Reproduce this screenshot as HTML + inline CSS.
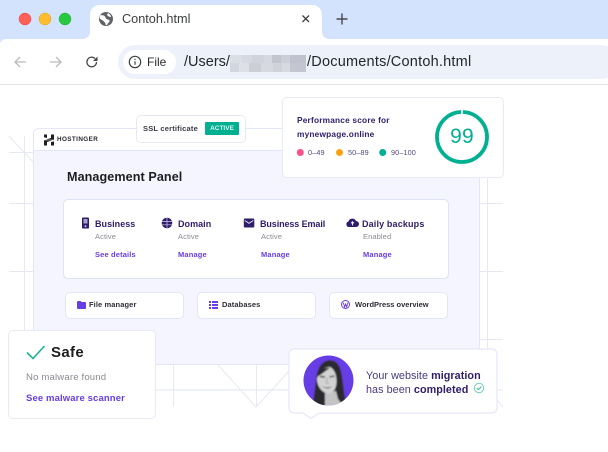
<!DOCTYPE html>
<html><head><meta charset="utf-8"><style>
html,body{margin:0;padding:0;width:608px;height:452px;overflow:hidden;background:#fff;font-family:"Liberation Sans",sans-serif}
.a{position:absolute;white-space:nowrap}
.card{position:absolute;background:#fff;border:1px solid #e6e8f8;border-radius:5px;box-sizing:border-box}
.b{font-weight:bold}
.soft{position:absolute;left:0;top:84px;width:608px;height:368px;filter:blur(.35px)}
.soft .a{margin-top:-84px}
.soft .card{margin-top:-84px}
.t{font-size:9px;font-weight:bold;color:#2f1c6a;letter-spacing:.04px}
.s{font-size:7.500px;color:#8a8a94;letter-spacing:.1px}
.l{font-size:7.500px;font-weight:bold;color:#673de6;letter-spacing:.15px}
.f{font-size:7.500px;font-weight:bold;color:#2d2d3a;letter-spacing:0}
</style></head><body>
<div class="a" style="left:0;top:0;width:608px;height:39px;background:#d3e3fd"></div>
<div class="a" style="left:0;top:39px;width:608px;height:45px;background:#fff"></div>
<div class="a" style="left:0;top:84px;width:608px;height:1px;background:#e4e4e6"></div>
<svg class="a" style="left:0;top:0" width="608" height="85">
<path d="M82 39c5 0 8-3 8-8V15c0-6 4-10 10-10h212c6 0 10 4 10 10v16c0 5 3 8 8 8z" fill="#fff"/>
<path d="M0 39h7q-5 0-7 4z" fill="#d3e3fd"/>
<circle cx="25" cy="19" r="6" fill="#fe5f57" stroke="#e2483f" stroke-width=".5"/>
<circle cx="45" cy="19" r="6" fill="#febc2e" stroke="#dea123" stroke-width=".5"/>
<circle cx="65" cy="19" r="6" fill="#28c840" stroke="#1fab32" stroke-width=".5"/>
<circle cx="106" cy="19" r="7" fill="#5f6368"/>
<path d="M100.500 15c2 .5 3 0 4 1s1 2 2 3 3 0 3 2-2 1.500-2 3.500c-1 1-2 .5-2-.5s-1-2-2-3-2.500-1-3.500-2.500 0-2.500.5-3.500zM108 13c1 1 3 2 3 4-2 0-3-1-4-2z" fill="#fff"/>
<path d="M302.500 15.500l6.500 6.500M309 15.500l-6.500 6.500" stroke="#3c4043" stroke-width="1.300" fill="none"/>
<path d="M342 13.500v11M336.500 19h11" stroke="#47494d" stroke-width="1.400" fill="none"/>
<rect x="118" y="45" width="500" height="34" rx="17" fill="#edf2fa"/>
<rect x="123" y="50" width="53" height="24" rx="12" fill="#fff"/>
<path d="M26 62H15M20 57L15 62l5 5" stroke="#b9bbbf" stroke-width="1.300" fill="none"/>
<path d="M50 62h11M56 57l5 5-5 5" stroke="#b9bbbf" stroke-width="1.300" fill="none"/>
<path d="M96.500 62a4.800 4.800 0 1 1-1.500-3.500" stroke="#45474a" stroke-width="1.300" fill="none"/>
<path d="M97.500 56.500v4.500H93z" fill="#45474a"/>
<circle cx="135" cy="62" r="5.700" stroke="#3c4043" stroke-width="1.200" fill="none"/>
<path d="M135 61.200v3.500M135 58.700v1.300" stroke="#3c4043" stroke-width="1.200"/>
<g>
<rect x="230" y="55" width="76" height="17" fill="#d0d3dc"/>
<rect x="230" y="55" width="12" height="8" fill="#dcdee6"/><rect x="242" y="55" width="10" height="8" fill="#d6d9e1"/><rect x="252" y="55" width="12" height="8" fill="#d0d3dc"/><rect x="264" y="55" width="8" height="8" fill="#d5d8e0"/><rect x="272" y="55" width="9" height="8" fill="#c2c5cf"/><rect x="281" y="55" width="9" height="8" fill="#ccced8"/><rect x="290" y="55" width="16" height="8" fill="#c0c3cd"/>
<rect x="230" y="63" width="9" height="9" fill="#d3d6df"/><rect x="239" y="63" width="10" height="9" fill="#dee0e8"/><rect x="249" y="63" width="12" height="9" fill="#cbced7"/><rect x="261" y="63" width="12" height="9" fill="#d7d9e1"/><rect x="273" y="63" width="9" height="9" fill="#cfd2da"/><rect x="282" y="63" width="8" height="9" fill="#d8dae2"/><rect x="290" y="63" width="16" height="9" fill="#c3c6d0"/>
</g>
</svg>
<div class="a" style="left:122px;top:11px;font-size:12.700px;color:#3b3d40;line-height:16px">Contoh.html</div>
<div class="a" style="left:147px;top:54px;font-size:12px;color:#2a2c2f;line-height:16px">File</div>
<div class="a" style="left:184px;top:54px;font-size:14.500px;color:#24262a;line-height:16px">/Users/</div>
<div class="a" style="left:307px;top:54px;font-size:14.500px;color:#24262a;line-height:16px;letter-spacing:.22px">/Documents/Contoh.html</div>

<div class="soft">
<svg class="a" style="left:0;top:84px" width="608" height="368" viewBox="0 84 608 368">
<g stroke="#e6e8f6" stroke-width="1" fill="none">
<path d="M24.500 136V331M9 152.500H33M9 136L33 162M9 203.500H33M9 271.500H33"/>
<path d="M487.500 177V349M479 203.500H503M479 271.500H503M479 339.500H503"/>
<path d="M155 390H290M497 390H503" stroke-width="1.200" stroke="#e8eaf8"/>
<path d="M173.500 365V407M256.500 365V407M218 365L256 407L290 370M497 400L503 407"/>
</g>
</svg>
<div class="card" style="left:33px;top:128px;width:447px;height:237px;border-color:#e3e6f8;background:#f4f5ff;overflow:hidden;border-radius:6px">
<div style="position:absolute;left:0;top:0;width:100%;height:21px;background:#fff;border-bottom:1px solid #e3e6f8"></div>
</div>
<svg class="a" style="left:43px;top:134px;margin-top:-84px" width="12" height="12" viewBox="0 0 12 12"><path d="M1 .5h3v3.500L1 3.200zM8 .5h3v5.200H2.500L8 4zM1 6.300h8.500L4 8v3.500H1zM8 8l3-.6v4.100H8z" fill="#1d1e20"/></svg>
<div class="a b" style="left:57px;top:135px;font-size:6.300px;letter-spacing:.42px;color:#26262e;line-height:9px">HOSTINGER</div>
<div class="card" style="left:136px;top:115px;width:110px;height:28px"></div>
<div class="a b" style="left:143px;top:124px;font-size:7.500px;color:#3a3a46;line-height:10px;letter-spacing:.2px">SSL certificate</div>
<div class="a b" style="left:205px;top:122px;width:34px;height:13px;background:#00b090;color:#dff7f1;font-size:6.500px;line-height:13px;text-align:center;border-radius:1px">ACTIVE</div>
<div class="a b" style="left:67px;top:169px;font-size:12.600px;color:#1d1e20;line-height:16px;letter-spacing:.08px">Management Panel</div>

<div class="card" style="left:63px;top:199px;width:386px;height:80px;border-color:#dfe2f6"></div>
<svg class="a" style="left:80px;top:216px;margin-top:-84px" width="12" height="14" viewBox="0 0 12 14"><rect x="2" y="1.500" width="7" height="11" rx="1" fill="#2f1c6a"/><rect x="3.500" y="3" width="4" height="4.500" fill="#a9a3cc"/><circle cx="5.500" cy="10.300" r="1" fill="#cfcbe6"/></svg>
<div class="a t" style="left:95px;top:218px;line-height:12px">Business</div>
<div class="a s" style="left:95px;top:232px;line-height:10px">Active</div>
<div class="a l" style="left:95px;top:250px;line-height:10px">See details</div>
<svg class="a" style="left:161px;top:217px;margin-top:-84px" width="12" height="12" viewBox="0 0 12 12"><circle cx="6" cy="6" r="5.300" fill="#2f1c6a"/><path d="M1 4.500h10M1 7.800h10M6 1v10" stroke="#cfcbe6" stroke-width=".7"/></svg>
<div class="a t" style="left:178px;top:218px;line-height:12px">Domain</div>
<div class="a s" style="left:178px;top:232px;line-height:10px">Active</div>
<div class="a l" style="left:178px;top:250px;line-height:10px">Manage</div>
<svg class="a" style="left:243px;top:218px;margin-top:-84px" width="12" height="10" viewBox="0 0 12 10"><rect x=".8" y=".5" width="10.500" height="9" rx="1" fill="#2f1c6a"/><path d="M1.800 2.500L6 5.300 10.300 2.500" stroke="#e6e4f4" stroke-width="1" fill="none"/></svg>
<div class="a t" style="left:260px;top:218px;line-height:12px;letter-spacing:-.1px">Business Email</div>
<div class="a s" style="left:261px;top:232px;line-height:10px">Active</div>
<div class="a l" style="left:261px;top:250px;line-height:10px">Manage</div>
<svg class="a" style="left:346px;top:217px;margin-top:-84px" width="13" height="11" viewBox="0 0 13 11"><path d="M3 10a2.800 2.800 0 0 1-.5-5.500A4 4 0 0 1 10 4a3 3 0 0 1 0 6z" fill="#2f1c6a"/><path d="M6.500 8.500V5M5 6.300L6.500 4.800 8 6.300" stroke="#fff" stroke-width=".9" fill="none"/></svg>
<div class="a t" style="left:362px;top:218px;line-height:12px;letter-spacing:.15px">Daily backups</div>
<div class="a s" style="left:363px;top:232px;line-height:10px">Enabled</div>
<div class="a l" style="left:363px;top:250px;line-height:10px">Manage</div>

<div class="card" style="left:65px;top:292px;width:119px;height:27px;border-color:#e3e6f8"></div>
<svg class="a" style="left:77px;top:301px;margin-top:-84px" width="9" height="8" viewBox="0 0 9 8"><path d="M0 1a1 1 0 0 1 1-1h2.500l1 1H8a1 1 0 0 1 1 1v5a1 1 0 0 1-1 1H1a1 1 0 0 1-1-1z" fill="#673de6"/></svg>
<div class="a f" style="left:89px;top:300px;line-height:10px;letter-spacing:.1px">File manager</div>
<div class="card" style="left:197px;top:292px;width:119px;height:27px;border-color:#e3e6f8"></div>
<svg class="a" style="left:209px;top:301px;margin-top:-84px" width="9" height="8" viewBox="0 0 9 8"><path d="M0 0h2v2H0zM3 0h6v2H3zM0 3h2v2H0zM3 3h6v2H3zM0 6h2v2H0zM3 6h6v2H3z" fill="#673de6"/></svg>
<div class="a f" style="left:222px;top:300px;line-height:10px;letter-spacing:.1px">Databases</div>
<div class="card" style="left:329px;top:292px;width:119px;height:27px;border-color:#e3e6f8"></div>
<svg class="a" style="left:341px;top:300px;margin-top:-84px" width="9" height="9" viewBox="0 0 9 9"><circle cx="4.500" cy="4.500" r="4" fill="none" stroke="#673de6" stroke-width="1"/><path d="M2.300 2.800L3.600 7 4.600 4 5.600 7 6.800 2.800" stroke="#673de6" stroke-width=".9" fill="none"/></svg>
<div class="a f" style="left:355px;top:300px;line-height:10px">WordPress overview</div>

<div class="card" style="left:282px;top:96.500px;width:222px;height:81px;border-color:#e8eaf8;border-width:1.200px"></div>
<div class="a b" style="left:297px;top:114px;font-size:8.300px;color:#2f1c6a;line-height:12px;letter-spacing:.2px">Performance score for<br><span style="display:inline-block;margin-top:2px">mynewpage.online</span></div>
<svg class="a" style="left:295px;top:145px;margin-top:-84px" width="125" height="14"><circle cx="5.300" cy="7.500" r="3.500" fill="#fc5185"/><circle cx="44.500" cy="7.500" r="3.500" fill="#ffa113"/><circle cx="87.700" cy="7.500" r="3.500" fill="#00b090"/></svg>
<div class="a" style="left:308px;top:147.500px;font-size:7.300px;color:#54497f;line-height:10px;letter-spacing:.1px">0–49</div>
<div class="a" style="left:348px;top:147.500px;font-size:7.300px;color:#54497f;line-height:10px;letter-spacing:.1px">50–89</div>
<div class="a" style="left:391px;top:147.500px;font-size:7.300px;color:#54497f;line-height:10px;letter-spacing:.1px">90–100</div>
<svg class="a" style="left:434px;top:109px;margin-top:-84px" width="56" height="56" viewBox="0 0 56 56"><circle cx="28" cy="28" r="25" fill="none" stroke="#00b090" stroke-width="3.800" stroke-dasharray="155 2.100" transform="rotate(-88 28 28)"/></svg>
<div class="a" style="left:434px;top:125px;width:56px;text-align:center;font-size:21px;color:#00b090;line-height:24px;letter-spacing:.2px">99</div>

<div class="card" style="left:8px;top:330px;width:147.500px;height:88.500px;border-color:#e8eaf8;border-width:1.200px"></div>
<svg class="a" style="left:25.500px;top:345px;margin-top:-84px" width="20" height="15" viewBox="0 0 20 15"><path d="M1 7.500L7 13.500 18.500 1" stroke="#1fb092" stroke-width="1.600" fill="none"/></svg>
<div class="a b" style="left:51px;top:344px;font-size:15px;color:#1d1e20;line-height:18px;letter-spacing:.35px">Safe</div>
<div class="a" style="left:26px;top:372px;font-size:9.600px;color:#8a8a94;line-height:12px;letter-spacing:.15px">No malware found</div>
<div class="a b" style="left:26px;top:393px;font-size:9.500px;color:#673de6;line-height:12px;letter-spacing:.12px">See malware scanner</div>

<svg class="a" style="left:288px;top:348px;margin-top:-84px" width="211" height="74" viewBox="0 0 211 74"><path d="M6 1H204a5 5 0 0 1 5 5V60a5 5 0 0 1-5 5H31l-8 5.500-8-5.500H6a5 5 0 0 1-5-5V6a5 5 0 0 1 5-5z" fill="#fff" stroke="#e6e8f8" stroke-width="1.200"/></svg>
<svg class="a" style="left:303px;top:355px;margin-top:-84px" width="51" height="51" viewBox="0 0 51 51"><defs><clipPath id="c"><circle cx="25.500" cy="25.500" r="25"/></clipPath><filter id="bl" x="-10%" y="-10%" width="120%" height="120%"><feGaussianBlur stdDeviation=".8"/></filter></defs><circle cx="25.500" cy="25.500" r="25" fill="#673de6"/><g clip-path="url(#c)"><g filter="url(#bl)"><path d="M9 52C12 42 12 30 14 20 16 10 21 5.500 27 5.500 33 5.500 37 10 38.500 20 40 30 41 40 43 50z" fill="#2b2b2d"/><path d="M22 52V38L33 36 35 44 41 52z" fill="#c4c4c4"/><path d="M14 24c1-7 6-12 13-12 4 2 6.500 7 6.500 14 0 8-3.500 12.500-8 12.500-6 0-11.500-7-11.500-14.500z" fill="#d2d2d2"/><path d="M13 22c4-1 9-6 14-9-6-1-12 2-14 9z" fill="#2b2b2d"/><path d="M17 21.500l5 .5M26.500 22l5-1" stroke="#3d3d3d" stroke-width="1.400"/><path d="M19 31c3 1.800 7 1.800 10 .5-2.500 2.500-7 2.500-10-.5z" fill="#4a4a4a"/><path d="M24 23l-.5 5 2 .5" stroke="#9a9a9a" stroke-width=".8" fill="none"/></g></g></svg>
<div class="a" style="left:366px;top:369px;font-size:10.800px;color:#4a3b80;line-height:14px;letter-spacing:.05px">Your website <b style="color:#2f1c6a">migration</b><br>has been <b style="color:#2f1c6a">completed</b></div>
<svg class="a" style="left:473px;top:382px;margin-top:-84px" width="12" height="12" viewBox="0 0 12 12"><circle cx="6" cy="6" r="4.700" fill="none" stroke="#6fd0bc" stroke-width="1"/><path d="M3.800 6l1.600 1.600L8.300 4.600" stroke="#38bda2" stroke-width="1" fill="none"/></svg>
</div>
</body></html>
